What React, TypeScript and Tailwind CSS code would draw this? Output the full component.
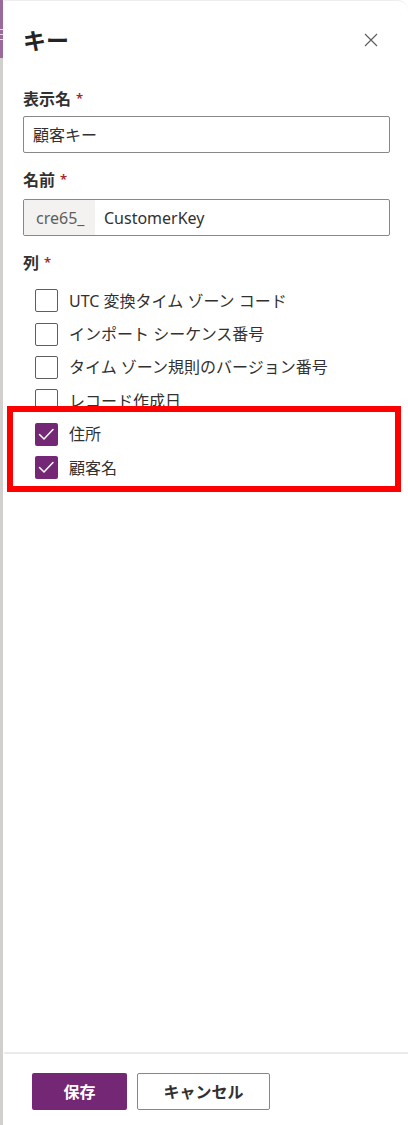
import React from "react";

const FONT = "font-['Noto_Sans','Noto_Sans_CJK_JP',sans-serif]";

function Label({ text }: { text: string }) {
  return (
    <div className="flex h-[22px] items-center text-[16px] font-semibold text-[#323130]">
      <span>{text}</span>
      <span className="ml-[5px] text-[13px] text-[#a4262c]">*</span>
    </div>
  );
}

function Checkbox({ label, checked }: { label: string; checked?: boolean }) {
  return (
    <div className="flex h-[33.4px] items-center pl-[12px]">
      {checked ? (
        <span className="flex h-[23px] w-[23px] items-center justify-center rounded-[2px] bg-[#742774]">
          <svg width="23" height="23" viewBox="0 0 23 23" fill="none">
            <path d="M4.5 11.5l4.5 4.5 9-9.5" stroke="white" strokeWidth="1.5" strokeLinecap="round" strokeLinejoin="round" />
          </svg>
        </span>
      ) : (
        <span className="h-[23px] w-[23px] rounded-[2px] border border-[#605e5c] bg-white" />
      )}
      <span className="ml-[11px] text-[16px] text-[#323130]">{label}</span>
    </div>
  );
}

export default function App() {
  const columns = [
    { label: "UTC 変換タイム ゾーン コード" },
    { label: "インポート シーケンス番号" },
    { label: "タイム ゾーン規則のバージョン番号" },
    { label: "レコード作成日" },
    { label: "住所", checked: true },
    { label: "顧客名", checked: true },
  ];

  return (
    <div className={`relative flex h-[1125px] w-[408px] overflow-hidden bg-white ${FONT}`}>
      {/* side strip of the page behind */}
      <div className="flex w-[3px] flex-col">
        <div className="flex h-[58px] flex-col bg-[#9b6a9b]">
          <div className="mt-[29px] h-px bg-[#e6d6e6]" />
          <div className="mt-[4px] h-px bg-[#e6d6e6]" />
          <div className="mt-[4px] h-px bg-[#e6d6e6]" />
        </div>
        <div className="flex-1 bg-[#d2d0ce]" />
      </div>
      <div className="w-px bg-white" />

      {/* panel */}
      <div className="flex flex-1 flex-col rounded-tr-[10px] border-t border-[#eeeeee]">
        <div className="flex-1 pl-[19px] pr-[18px]">
          {/* header */}
          <div className="flex h-[30px] items-center justify-between pr-[12px] mt-[24px]">
            <h1 className="text-[23px] font-bold text-[#242424]">キー</h1>
            <svg width="14" height="14" viewBox="0 0 14 14" fill="none">
              <path d="M1 1l12 12M13 1L1 13" stroke="#605e5c" strokeWidth="1.2" />
            </svg>
          </div>

          {/* display name */}
          <div className="mt-[33px]">
            <Label text="表示名" />
            <div className="mt-[6px] flex h-[37px] items-center rounded-[2px] border border-[#8a8886] pl-[9px] text-[16px] text-[#323130]">
              顧客キー
            </div>
          </div>

          {/* name */}
          <div className="mt-[16px]">
            <Label text="名前" />
            <div className="mt-[8px] flex h-[37px] items-stretch overflow-hidden rounded-[2px] border border-[#8a8886] text-[16px]">
              <div className="flex w-[71px] items-center bg-[#f3f2f1] pl-[12px] text-[#605e5c]">cre65_</div>
              <div className="flex items-center pl-[9px] text-[#323130]">CustomerKey</div>
            </div>
          </div>

          {/* columns */}
          <div className="mt-[16px]">
            <Label text="列" />
            <div className="mt-[10px] flex flex-col">
              {columns.map((c, i) => (
                <Checkbox key={i} label={c.label} checked={c.checked} />
              ))}
            </div>
          </div>
        </div>

        {/* footer */}
        <div className="flex gap-[10px] border-t-2 border-[#edebe9] pb-[15px] pl-[28px] pt-[19px]">
          <button className="h-[37px] w-[95px] rounded-[2px] bg-[#742774] text-[16px] font-bold text-white">
            保存
          </button>
          <button className="h-[37px] w-[133px] rounded-[2px] border border-[#8a8886] bg-white text-[16px] font-bold text-[#323130]">
            キャンセル
          </button>
        </div>
      </div>

      {/* highlight annotation */}
      <div className="absolute left-[7px] top-[406px] h-[86px] w-[394px] border-[6px] border-[#ff0000]" />
    </div>
  );
}
